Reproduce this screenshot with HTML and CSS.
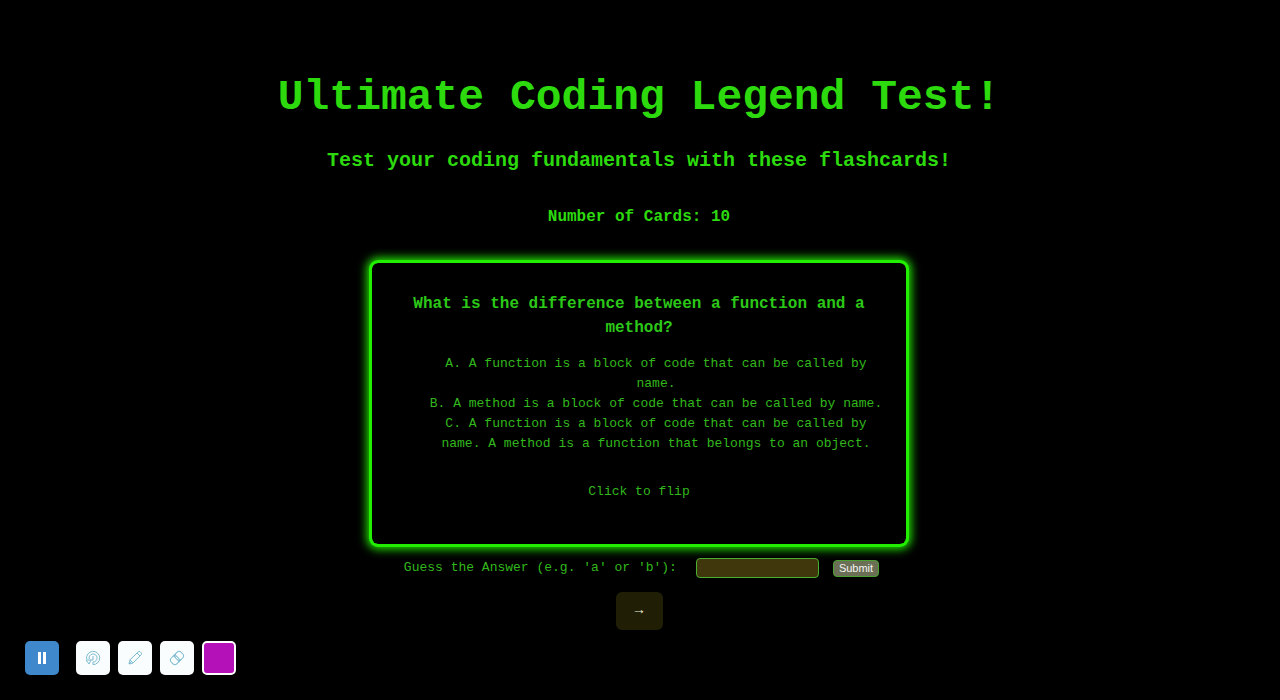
FILE: index.html
```html
<!DOCTYPE html>
<html lang="en">
<head>
<meta charset="utf-8">
<meta name="viewport" content="width=device-width, initial-scale=1">
<title>Ultimate Coding Legend Test!</title>
<link rel="stylesheet" href="styles.css">
</head>
<body>
<main class="page">
  <h1 class="title">Ultimate Coding Legend Test!</h1>
  <h2 class="subtitle">Test your coding fundamentals with these flashcards!</h2>
  <h3 class="count">Number of Cards: 10</h3>
  <section class="card">
    <h3 class="question">What is the difference between a function and a method?</h3>
    <ul class="answers">
      <li>A. A function is a block of code that can be called by name.</li>
      <li>B. A method is a block of code that can be called by name.</li>
      <li>C. A function is a block of code that can be called by name. A method is a function that belongs to an object.</li>
    </ul>
    <p class="hint">Click to flip</p>
  </section>
  <form class="guess">
    <label class="guess-label" for="guess">Guess the Answer (e.g. 'a' or 'b'):</label>
    <input class="guess-input" id="guess" type="text">
    <button class="submit" type="submit">Submit</button>
  </form>
  <button class="next" type="button" aria-label="Next card">→</button>
</main>
<div class="toolbar">
  <button class="tool pause" type="button" aria-label="Pause">
    <svg width="12" height="14" viewBox="0 0 12 14"><path d="M2 1h3v12H2zM7 1h3v12H7z" fill="#fff"/></svg>
  </button>
  <button class="tool" type="button" aria-label="Replay">
    <svg class="icon" width="16" height="16" viewBox="0 0 16 16"><path d="M1.6 9A6.6 6.6 0 1 1 8 14.6L8 12A4 4 0 1 0 4.2 9M1 10h5l-2 4zM8 6v4H6"/></svg>
  </button>
  <button class="tool" type="button" aria-label="Draw">
    <svg class="icon" width="16" height="16" viewBox="0 0 16 16"><path d="M2 14l1-4.2 8.3-8a1.3 1.3 0 0 1 1.8 0l1.1 1.1a1.3 1.3 0 0 1 0 1.8L6 13zM3 9.8L6 13M10 3l3 3M2 14l2.2-2.4"/></svg>
  </button>
  <button class="tool" type="button" aria-label="Erase">
    <svg class="icon" width="16" height="16" viewBox="0 0 16 16"><g transform="rotate(-45 8 8)"><rect x="1" y="4" width="14" height="8" rx="3"/><path d="M6 4a3 3 0 0 1 3 3v2a3 3 0 0 1-3 3M10 4a3 3 0 0 0-3 3v2a3 3 0 0 0 3 3"/></g></svg>
  </button>
  <button class="tool swatch" type="button" aria-label="Pen colour"></button>
</div>
</body>
</html>
```
FILE: styles.css
```css
* {
  box-sizing: border-box;
}

body {
  margin: 0;
  background: #000;
  color: #32b81c;
  font: 13px/20px "Courier New", "Liberation Mono", monospace;
}

.page {
  display: flex;
  flex-direction: column;
  align-items: center;
  padding: 72px 18px 16px 16px;
  text-align: center;
}

.title,
.subtitle,
.count {
  margin: 0;
  color: #2cda0e;
}

.title {
  font-size: 43px;
  line-height: 52px;
}

.subtitle {
  margin-top: 25px;
  font-size: 20px;
  line-height: 24px;
}

.count {
  margin-top: 32px;
  font-size: 16px;
  line-height: 24px;
}

.card {
  width: 100%;
  max-width: 534px;
  margin-top: 34px;
  padding: 29px 20px 42px;
  border-radius: 6px;
  box-shadow: 0 0 0 3px #22ee00, 0 0 10px 5px #22ee00;
}

.question {
  margin: 0 0 14px;
  color: #2cc818;
  font-size: 16px;
  line-height: 24px;
}

.answers {
  margin: 0;
  padding: 0 0 0 34px;
  list-style: none;
}

.hint {
  margin: 28px 0 0;
}

.guess {
  display: flex;
  flex-wrap: wrap;
  align-items: center;
  justify-content: center;
  gap: 14px;
  margin-top: 14px;
}

.guess-label {
  min-width: 283px;
}

.guess-input {
  width: 123px;
  height: 20px;
  padding: 0 6px;
  border: 1px solid #48b030;
  border-radius: 4px;
  background: #40380c;
  color: #fff;
  font: inherit;
}

.submit {
  height: 17px;
  padding: 0 5px;
  border: 1px solid #48a030;
  border-radius: 4px;
  background: #6b6f55;
  color: #f4f4f4;
  font: 11px/14px "Liberation Sans", Arial, sans-serif;
}

.next {
  width: 47px;
  height: 38px;
  margin-top: 14px;
  padding: 0 0 4px;
  border: 0;
  border-radius: 6px;
  background: #211e06;
  color: #f4f4d8;
  font: 14px/20px "Liberation Sans", Arial, sans-serif;
}

.toolbar {
  position: fixed;
  bottom: 25px;
  left: 25px;
  display: flex;
  gap: 8px;
}

.tool {
  display: flex;
  align-items: center;
  justify-content: center;
  width: 34px;
  height: 34px;
  padding: 0;
  border: 0;
  border-radius: 5px;
  background: #fafdfd;
}

.pause {
  margin-right: 9px;
  background: #4088cc;
}

.icon {
  fill: none;
  stroke: #7dbbd0;
  stroke-linejoin: round;
}

.swatch {
  border: 2px solid #fff;
  background: #b411b8;
}
```
